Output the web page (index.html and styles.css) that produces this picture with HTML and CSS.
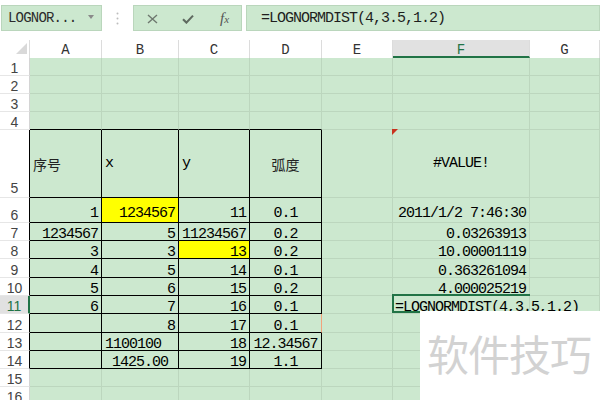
FILE: index.html
```html
<!DOCTYPE html>
<html>
<head>
<meta charset="utf-8">
<link rel="stylesheet" href="styles.css">
</head>
<body>
<div class="app">
  <div class="toolbar">
    <div class="namebox"><span class="nb-text">LOGNOR...</span><span class="caret"></span></div>
    <div class="dots">
      <svg width="3" height="13" viewBox="0 0 3 13"><circle cx="1.5" cy="1.5" r="1" fill="#bdbdbd"/><circle cx="1.5" cy="6.5" r="1" fill="#bdbdbd"/><circle cx="1.5" cy="11.5" r="1" fill="#bdbdbd"/></svg>
    </div>
    <div class="fxbox">
      <svg class="ico-x" width="11" height="10" viewBox="0 0 11 10"><path d="M1 1 L10 9 M10 1 L1 9" stroke="#6e786f" stroke-width="1.4" fill="none"/></svg>
      <svg class="ico-ok" width="12" height="10" viewBox="0 0 12 10"><path d="M1 5.2 L4.4 8.6 L11 1.6" stroke="#5f6a60" stroke-width="2.1" fill="none"/></svg>
      <span class="fx">f<span class="fx-x">x</span></span>
    </div>
    <div class="formula">=LOGNORMDIST(4,3.5,1.2)</div>
  </div>

  <div class="sheet">
    <!-- header -->
    <div class="corner"><svg width="30" height="18" viewBox="0 0 30 18"><polygon points="27,3 27,14 16,14" fill="#d9d9d9"/></svg></div>
    <div class="ch">A</div><div class="ch">B</div><div class="ch">C</div><div class="ch">D</div><div class="ch">E</div><div class="ch ch-sel">F</div><div class="ch">G</div>

    <!-- row 1 -->
    <div class="rh">1</div><div class="c"></div><div class="c"></div><div class="c"></div><div class="c"></div><div class="c"></div><div class="c"></div><div class="c"></div>
    <!-- row 2 -->
    <div class="rh">2</div><div class="c"></div><div class="c"></div><div class="c"></div><div class="c"></div><div class="c"></div><div class="c"></div><div class="c"></div>
    <!-- row 3 -->
    <div class="rh">3</div><div class="c"></div><div class="c"></div><div class="c"></div><div class="c"></div><div class="c"></div><div class="c"></div><div class="c"></div>
    <!-- row 4 -->
    <div class="rh">4</div><div class="c kb"></div><div class="c kb"></div><div class="c kb"></div><div class="c kb"></div><div class="c"></div><div class="c"></div><div class="c"></div>
    <!-- row 5 -->
    <div class="rh rhb rh5">5</div>
    <div class="c k mid cjk">序号</div>
    <div class="c k mid">x</div>
    <div class="c k mid">y</div>
    <div class="c k mid m cjk">弧度</div>
    <div class="c"></div>
    <div class="c mid m f5"><span class="comment"></span>#VALUE!</div>
    <div class="c"></div>
    <!-- row 6 -->
    <div class="rh rhb">6</div>
    <div class="c k r p3">1</div>
    <div class="c k r p3 yel">1234567</div>
    <div class="c k r p3">11</div>
    <div class="c k m p3">0.1</div>
    <div class="c"></div>
    <div class="c r p3">2011/1/2 7:46:30</div>
    <div class="c"></div>
    <!-- row 7 -->
    <div class="rh rhb">7</div>
    <div class="c k r">1234567</div>
    <div class="c k r">5</div>
    <div class="c k r">11234567</div>
    <div class="c k m">0.2</div>
    <div class="c"></div>
    <div class="c r">0.03263913</div>
    <div class="c"></div>
    <!-- row 8 -->
    <div class="rh rhb">8</div>
    <div class="c k r">3</div>
    <div class="c k r">3</div>
    <div class="c k r yel">13</div>
    <div class="c k m">0.2</div>
    <div class="c"></div>
    <div class="c r">10.00001119</div>
    <div class="c"></div>
    <!-- row 9 -->
    <div class="rh rhb">9</div>
    <div class="c k r">4</div>
    <div class="c k r">5</div>
    <div class="c k r">14</div>
    <div class="c k m">0.1</div>
    <div class="c"></div>
    <div class="c r">0.363261094</div>
    <div class="c"></div>
    <!-- row 10 -->
    <div class="rh rhb">10</div>
    <div class="c k r">5</div>
    <div class="c k r">6</div>
    <div class="c k r">15</div>
    <div class="c k m">0.2</div>
    <div class="c"></div>
    <div class="c r">4.000025219</div>
    <div class="c"></div>
    <!-- row 11 -->
    <div class="rh rh-sel">11</div>
    <div class="c k r">6</div>
    <div class="c k r">7</div>
    <div class="c k r">16</div>
    <div class="c k m">0.1</div>
    <div class="c"></div>
    <div class="c f11"><span class="editor"></span><span class="edit-text">=LOGNORMDIST(4,3.5,1.2)</span><span class="cursor"></span></div>
    <div class="c"></div>
    <!-- row 12 -->
    <div class="rh rhb">12</div>
    <div class="c k"></div>
    <div class="c k r">8</div>
    <div class="c k r">17</div>
    <div class="c k m orange">0.1</div>
    <div class="c"></div>
    <div class="c"></div>
    <div class="c"></div>
    <!-- row 13 -->
    <div class="rh rhb">13</div>
    <div class="c k"></div>
    <div class="c k">1100100</div>
    <div class="c k r">18</div>
    <div class="c k m">12.34567</div>
    <div class="c"></div>
    <div class="c"></div>
    <div class="c"></div>
    <!-- row 14 -->
    <div class="rh rhb">14</div>
    <div class="c k"></div>
    <div class="c k m">1425.00</div>
    <div class="c k r">19</div>
    <div class="c k m">1.1</div>
    <div class="c"></div>
    <div class="c"></div>
    <div class="c"></div>
    <!-- row 15 -->
    <div class="rh">15</div><div class="c"></div><div class="c"></div><div class="c"></div><div class="c"></div><div class="c"></div><div class="c"></div><div class="c"></div>
    <!-- row 16 -->
    <div class="rh">16</div><div class="c"></div><div class="c"></div><div class="c"></div><div class="c"></div><div class="c"></div><div class="c"></div><div class="c"></div>
  </div>

  <div class="watermark">软件技巧</div>
</div>
</body>
</html>
```

FILE: styles.css
```css
html, body {
  margin: 0;
  padding: 0;
  background: #ffffff;
}

.app {
  position: relative;
  width: 600px;
  height: 400px;
  overflow: hidden;
  font-family: "Liberation Mono", "Noto Sans CJK SC", monospace;
  color: #000;
}

/* ---------- toolbar ---------- */
.toolbar {
  display: flex;
  align-items: flex-start;
  height: 40px;
  box-sizing: border-box;
  padding-top: 5px;
  padding-left: 1px;
  background: #fff;
}

.namebox,
.fxbox,
.formula {
  height: 26px;
  box-sizing: border-box;
  background: #cce8cf;
  border: 1px solid #bad6bc;
  display: flex;
  align-items: center;
}

.namebox {
  width: 101px;
  padding-left: 6px;
  position: relative;
}

.nb-text {
  font-size: 14px;
  letter-spacing: -0.8px;
  color: #2b2b2b;
}

.caret {
  position: absolute;
  right: 7px;
  top: 9px;
  width: 0;
  height: 0;
  border-left: 3.5px solid transparent;
  border-right: 3.5px solid transparent;
  border-top: 4px solid #8a8a8a;
}

.dots {
  width: 31px;
  height: 26px;
  display: flex;
  align-items: center;
  justify-content: center;
}

.fxbox {
  width: 109px;
  padding-left: 13px;
}

.ico-x { margin-top: 1px; }
.ico-ok { margin-left: 24px; margin-top: 1px; }

.fx {
  margin-left: 26px;
  font-family: "Liberation Serif", serif;
  font-style: italic;
  font-size: 15px;
  color: #555;
}
.fx-x { font-size: 11px; }

.formula {
  flex: 1;
  margin-left: 4px;
  padding-left: 14px;
  font-size: 15px;
  letter-spacing: -1px;
  color: #1e1e1e;
}

/* ---------- sheet ---------- */
.sheet {
  display: grid;
  grid-template-columns: 30px 72px 77px 71px 72px 71px 137px 70px;
  grid-template-rows: 18px 18px 18px 18px 18px 68px 25px 18px 18px 19px 18px 18px 19px 18px 18px 18px 18px;
  background: #cce8cf;
}

.corner {
  background: #fff;
  border-right: 1px solid #dcdcdc;
  box-sizing: border-box;
}
.corner svg { display: block; }

.ch {
  background: #fff;
  box-sizing: border-box;
  border-right: 1px solid #dcdcdc;
  display: flex;
  align-items: flex-end;
  justify-content: center;
  font-size: 14px;
  line-height: 12px;
  padding-bottom: 2px;
  color: #333;
}

.ch-sel {
  background: #e1e1e1;
  border-bottom: 2px solid #217346;
  padding-bottom: 0;
  color: #217346;
}

.rh {
  background: #fff;
  box-sizing: border-box;
  border-right: 1px solid #d4d4d4;
  border-bottom: 1px solid #e6e6e6;
  display: flex;
  align-items: flex-end;
  justify-content: center;
  font-family: "Liberation Sans", sans-serif;
  font-size: 14px;
  line-height: 13px;
  color: #444;
}

.rh5 { padding-bottom: 2px; }
.rhb { border-right-color: #000; }

.rh-sel {
  background: #e1e1e1;
  color: #217346;
  border-right: 2px solid #217346;
}

.c {
  box-sizing: border-box;
  border-right: 1px solid #bcd6be;
  border-bottom: 1px solid #bcd6be;
  display: flex;
  align-items: flex-end;
  padding: 0 3px;
  white-space: nowrap;
  font-size: 15px;
  letter-spacing: -1px;
  line-height: 11px;
}

.k {
  border-right-color: #000;
  border-bottom-color: #000;
}
.kb { border-bottom-color: #000; }
.orange { border-right: 1px solid #f2a27c; }

.r { justify-content: flex-end; }
.m { justify-content: center; }
.mid { align-items: center; line-height: 16px; }
.p3 { padding-bottom: 3px; }
.yel { background: #ffff00; }

.cjk {
  font-family: "Noto Sans CJK SC", sans-serif;
  font-size: 14px;
  letter-spacing: 0;
  color: #222;
}

.f5 { position: relative; }
.comment {
  position: absolute;
  left: -1px;
  top: -1px;
  width: 0;
  height: 0;
  border-top: 6px solid #c8321e;
  border-right: 6px solid transparent;
}

.f11 {
  position: relative;
  padding-left: 2px;
}
.editor {
  position: absolute;
  left: -1px;
  top: -2px;
  width: 138px;
  height: 19px;
  box-sizing: border-box;
  border-top: 2px solid #217346;
  border-left: 2px solid #217346;
  border-bottom: 2px solid #217346;
}
.cursor {
  display: inline-block;
  width: 1px;
  height: 14px;
  margin-left: 3px;
  margin-bottom: -1px;
  background: #000;
}

/* ---------- watermark overlay ---------- */
.watermark {
  position: absolute;
  left: 420px;
  top: 311px;
  width: 180px;
  height: 89px;
  background: #fff;
  box-sizing: border-box;
  padding-left: 7px;
  padding-top: 19px;
  font-family: "Noto Sans CJK SC", sans-serif;
  font-size: 42px;
  line-height: 46px;
  letter-spacing: -1px;
  color: #d2d2d2;
}
```
